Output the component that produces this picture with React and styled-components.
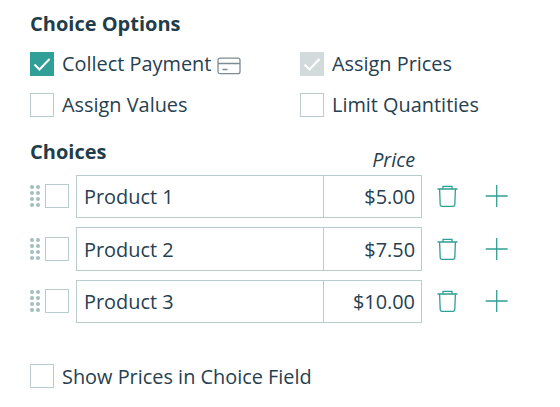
import React from "react";
import styled, { createGlobalStyle } from "styled-components";

const GlobalStyle = createGlobalStyle`
  html, body {
    margin: 0;
    padding: 0;
    background: #fff;
  }
`;

const choices = [
  { name: "Product 1", price: "$5.00" },
  { name: "Product 2", price: "$7.50" },
  { name: "Product 3", price: "$10.00" },
];

function CheckMark() {
  return (
    <svg width="24" height="24" viewBox="0 0 24 24" fill="none">
      <path d="M4.5 12.5l5 5 10-10.5" stroke="#fff" strokeWidth="2" />
    </svg>
  );
}

function CardIcon() {
  return (
    <svg width="24" height="20" viewBox="0 0 24 20" fill="none" stroke="#7d8c90" strokeWidth="1.3">
      <rect x="1" y="2.2" width="22" height="15.5" rx="2" />
      <path d="M1 7.5h22M5.5 13.5h5" />
    </svg>
  );
}

function TrashIcon() {
  return (
    <svg width="22" height="24" viewBox="0 0 22 24" fill="none" stroke="#2f9f97" strokeWidth="1.3">
      <path d="M0.5 5h20M6 4.8V2.4h9v2.4M2.6 5l0.6 15.4a1.8 1.8 0 0 0 1.8 1.9h11a1.8 1.8 0 0 0 1.8-1.9l0.6-15.4" />
    </svg>
  );
}

function PlusIcon() {
  return (
    <svg width="24" height="24" viewBox="0 0 24 24" fill="none" stroke="#2f9f97" strokeWidth="1.3">
      <path d="M11.7 1v22M0.7 12h22" />
    </svg>
  );
}

function DragDots() {
  return (
    <Dots>
      {Array.from({ length: 8 }).map((_, i) => (
        <Dot key={i} />
      ))}
    </Dots>
  );
}

export default function App() {
  return (
    <Page>
      <GlobalStyle />
      <Heading>Choice Options</Heading>
      <OptionGrid>
        <Option>
          <Box $variant="on">
            <CheckMark />
          </Box>
          <OptionLabel>Collect Payment</OptionLabel>
          <CardSlot>
            <CardIcon />
          </CardSlot>
        </Option>
        <Option>
          <Box $variant="disabled">
            <CheckMark />
          </Box>
          <OptionLabel>Assign Prices</OptionLabel>
        </Option>
        <Option>
          <Box />
          <OptionLabel>Assign Values</OptionLabel>
        </Option>
        <Option>
          <Box />
          <OptionLabel>Limit Quantities</OptionLabel>
        </Option>
      </OptionGrid>

      <ChoicesHeader>
        <Heading>Choices</Heading>
        <PriceLabel>Price</PriceLabel>
      </ChoicesHeader>

      <ChoiceList>
        {choices.map((c) => (
          <ChoiceRow key={c.name}>
            <DragDots />
            <Box />
            <Field>
              <NameCell>{c.name}</NameCell>
              <PriceCell>{c.price}</PriceCell>
            </Field>
            <TrashButton>
              <TrashIcon />
            </TrashButton>
            <PlusButton>
              <PlusIcon />
            </PlusButton>
          </ChoiceRow>
        ))}
      </ChoiceList>

      <Footer>
        <Option>
          <Box />
          <FooterLabel>Show Prices in Choice Field</FooterLabel>
        </Option>
      </Footer>
    </Page>
  );
}

const Page = styled.div`
  width: 560px;
  height: 407px;
  box-sizing: border-box;
  padding: 12px 0 0 30px;
  overflow: hidden;
  background: #fff;
  color: #26404f;
  font-family: "Open Sans", "Noto Sans", sans-serif;
  font-size: 19.9px;
`;

const Heading = styled.div`
  font-size: 20px;
  font-weight: 700;
  line-height: 24px;
  color: #1f3d4b;
`;

const OptionGrid = styled.div`
  display: grid;
  grid-template-columns: 270px 1fr;
  row-gap: 17px;
  margin-top: 16px;
`;

const Option = styled.div`
  display: flex;
  align-items: center;
  height: 24px;
  white-space: nowrap;
`;

const OptionLabel = styled.span`
  margin-bottom: 2px;
`;

const FooterLabel = styled.span`
  margin-bottom: 0;
`;

const Box = styled.div`
  flex: none;
  width: 24px;
  height: 24px;
  box-sizing: border-box;
  margin-right: 8px;
  background: ${(p) =>
    p.$variant === "on" ? "#2f9f97" : p.$variant === "disabled" ? "#d2dadb" : "#fff"};
  border: ${(p) => (p.$variant ? "none" : "1px solid #b9cbcb")};
`;

const CardSlot = styled.span`
  display: flex;
  margin-left: 6px;
  margin-top: 3px;
`;

const ChoicesHeader = styled.div`
  display: flex;
  justify-content: space-between;
  width: 385px;
  margin-top: 23px;
  height: 34.6px;
`;

const PriceLabel = styled.div`
  font-style: italic;
  font-size: 19.8px;
  line-height: 24px;
  margin-top: 8px;
`;

const ChoiceList = styled.div`
  display: flex;
  flex-direction: column;
  gap: 9px;
`;

const ChoiceRow = styled.div`
  display: flex;
  align-items: center;
  height: 43.5px;

  ${Box} {
    margin-right: 7px;
  }
`;

const Dots = styled.div`
  display: grid;
  grid-template-columns: 4px 4px;
  grid-auto-rows: 4px;
  column-gap: 2px;
  row-gap: 2px;
  width: 11px;
  margin-right: 4px;
`;

const Dot = styled.span`
  border-radius: 50%;
  background: #a3bfbd;
`;

const Field = styled.div`
  display: flex;
  width: 346px;
  height: 100%;
  box-sizing: border-box;
  border: 1px solid #b9cbcb;
`;

const NameCell = styled.div`
  flex: 1;
  display: flex;
  align-items: center;
  padding: 0.6px 0 0 7px;
  border-right: 1px solid #b9cbcb;
`;

const PriceCell = styled.div`
  width: 97px;
  box-sizing: border-box;
  display: flex;
  align-items: center;
  justify-content: flex-end;
  padding: 0.6px 6px 0 0;
`;

const TrashButton = styled.div`
  display: flex;
  margin-left: 15px;
`;

const PlusButton = styled.div`
  display: flex;
  margin-left: 26px;
`;

const Footer = styled.div`
  margin-top: 41px;
`;
